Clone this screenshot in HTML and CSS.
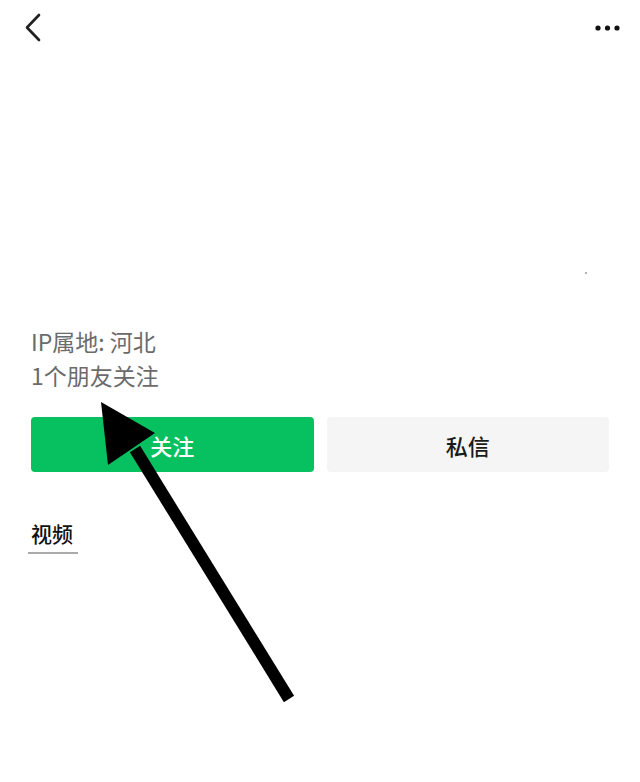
FILE: index.html
```html
<!DOCTYPE html>
<html lang="zh">
<head>
<meta charset="utf-8">
<link rel="stylesheet" href="styles.css">
</head>
<body>
<div class="page">
  <header class="topbar">
    <svg class="back" width="20" height="32" viewBox="0 0 20 32"><path d="M16 3 L4 15.5 L16 28" fill="none" stroke="#222" stroke-width="2.7" stroke-linecap="round" stroke-linejoin="round"/></svg>
    <svg class="more" width="26" height="8" viewBox="0 0 26 8"><circle cx="3" cy="4" r="2.6" fill="#111"/><circle cx="12.5" cy="4" r="2.6" fill="#111"/><circle cx="22" cy="4" r="2.6" fill="#111"/></svg>
  </header>
  <div class="cover"><span class="speck"></span></div>
  <section class="info">
    <div class="line">IP属地: 河北</div>
    <div class="line">1个朋友关注</div>
  </section>
  <div class="actions">
    <button class="btn follow">关注</button>
    <button class="btn msg">私信</button>
  </div>
  <nav class="tabs">
    <span class="tab">视频</span>
  </nav>
  <svg class="arrow" width="640" height="782" viewBox="0 0 640 782">
    <line x1="135" y1="449" x2="289" y2="699" stroke="#000" stroke-width="12"/>
    <polygon points="101,402 108,465 155,433" fill="#000"/>
  </svg>
</div>
</body>
</html>
```
FILE: styles.css
```css
html, body {
  margin: 0;
  padding: 0;
  background: #fff;
}
body {
  font-family: "Noto Sans CJK SC", "Noto Sans", sans-serif;
}
.page {
  position: relative;
  width: 640px;
  height: 782px;
  overflow: hidden;
}
.topbar {
  height: 56px;
  display: flex;
  align-items: center;
  justify-content: space-between;
  padding: 0 19px 0 23px;
}
.back {
  display: block;
  margin-top: -1px;
}
.more {
  display: block;
}
.cover {
  height: 268px;
  position: relative;
}
.speck {
  position: absolute;
  left: 585px;
  top: 216px;
  width: 2px;
  height: 2px;
  background: #999;
  border-radius: 1px;
}
.info {
  padding-left: 31px;
  color: #6b6b6b;
  font-size: 23px;
  line-height: 34px;
}
.actions {
  display: flex;
  gap: 13px;
  padding: 25px 31px 0 31px;
}
.btn {
  flex: 1;
  height: 55px;
  border: none;
  border-radius: 4px;
  font-family: "Noto Sans CJK SC", sans-serif;
  font-size: 22px;
  font-weight: 500;
}
.follow {
  background: #07c160;
  color: #fff;
}
.msg {
  background: #f5f5f5;
  color: #1a1a1a;
}
.tabs {
  padding: 46px 0 0 28px;
}
.tab {
  display: inline-block;
  padding: 0 3px 4px 3px;
  width: 44px;
  font-size: 21px;
  font-weight: 500;
  line-height: 30px;
  color: #111;
  border-bottom: 2px solid #aaa;
}
.arrow {
  position: absolute;
  left: 0;
  top: 0;
  pointer-events: none;
}
```
